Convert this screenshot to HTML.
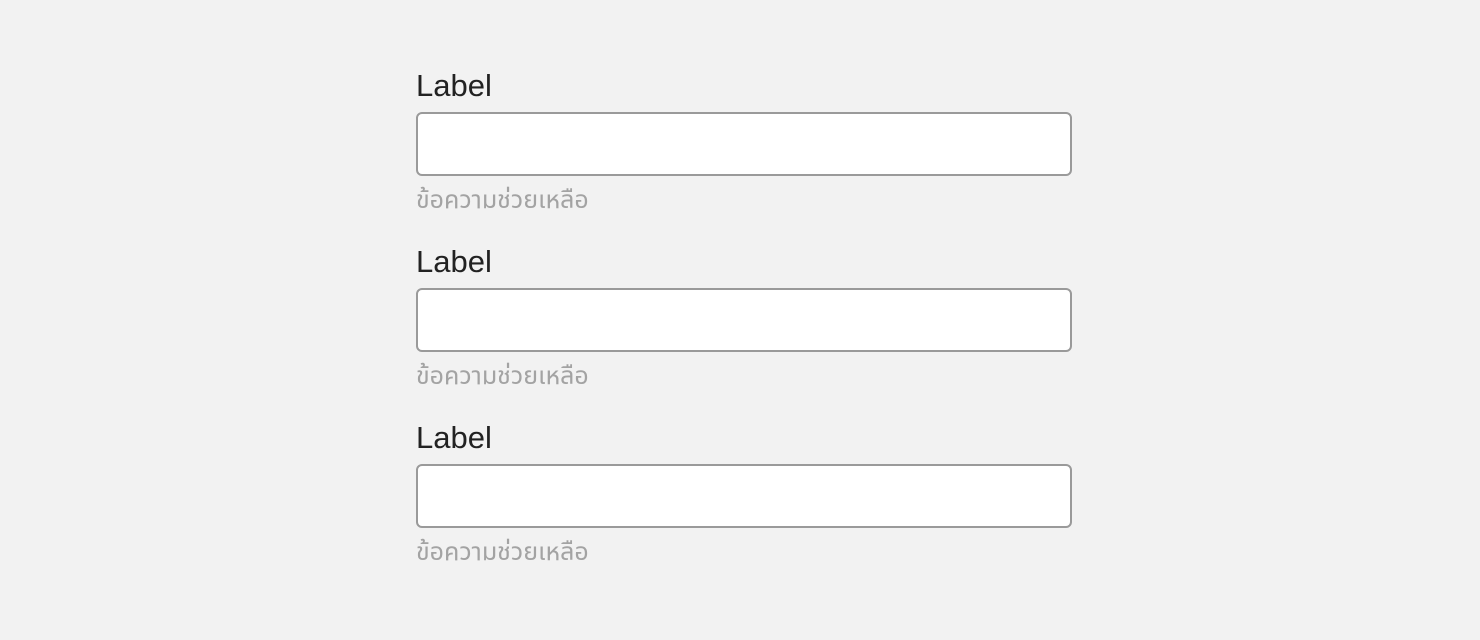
<!DOCTYPE html>
<html><head><meta charset="utf-8"><style>
html,body{margin:0;padding:0;background:#f2f2f2;width:1480px;height:640px;overflow:hidden}
.f{position:absolute;left:416px;width:656px}
.l{position:absolute;left:0;top:1px;font:31px "Liberation Sans",sans-serif;color:#222;line-height:34px}
.i{position:absolute;left:0;top:44px;width:652px;height:60px;border:2px solid #9a9a9a;border-radius:6px;background:#fff}
.h{position:absolute;left:0;top:115px;font:25px "Liberation Sans","Noto Sans Thai","Loma","Garuda",sans-serif;color:#a3a3a3;line-height:34px;white-space:nowrap}
</style></head><body>
<div class="f" style="top:68px"><div class="l">Label</div><div class="i"></div><div class="h">ข้อความช่วยเหลือ</div></div>
<div class="f" style="top:244px"><div class="l">Label</div><div class="i"></div><div class="h">ข้อความช่วยเหลือ</div></div>
<div class="f" style="top:420px"><div class="l">Label</div><div class="i"></div><div class="h">ข้อความช่วยเหลือ</div></div>
</body></html>
